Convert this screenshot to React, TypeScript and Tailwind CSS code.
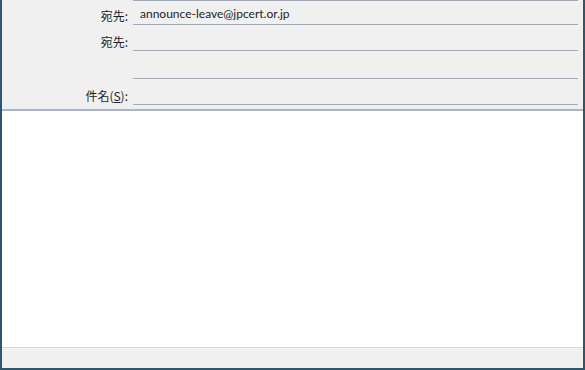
import React from "react";

const font = { fontFamily: '"Noto Sans CJK JP", "Noto Sans", sans-serif' };
const latin = { fontFamily: 'Lato, "Noto Sans", sans-serif' };

function Row({ label, value, h, accel }: { label?: string; value?: string; h: string; accel?: boolean }) {
  return (
    <div className={`flex ${h}`}>
      <div className="w-[131px] shrink-0 flex items-end justify-end pr-[5px] pb-[3px] text-[12px] text-[#1e1e1e] leading-none">
        {accel ? (
          <span>件名(<span className="underline">S</span>):</span>
        ) : (
          label && <span>{label}</span>
        )}
      </div>
      <div className="w-[445px] border-b border-[#a3acb6] flex items-end pl-[7px] pb-[4px] text-[12px] text-[#1e1e1e] leading-none" style={latin}>
        {value}
      </div>
    </div>
  );
}

export default function App() {
  return (
    <div className="w-[585px] h-[370px] flex flex-col border-l-2 border-r-2 border-b-2 border-[#2e566f] bg-white" style={font}>
      <div className="bg-[#f0f0f0] flex flex-col h-[109px]">
        <div className="flex h-px">
          <div className="w-[131px]" />
          <div className="w-[445px] bg-[#a3acb6]" />
        </div>
        <Row label="宛先:" value="announce-leave@jpcert.or.jp" h="h-[24px]" />
        <Row label="宛先:" h="h-[26px]" />
        <Row h="h-[28px]" />
        <Row accel h="h-[26px]" />
      </div>
      <div className="h-[2px] bg-[#a9b5c3]" />
      <div className="flex-1 bg-white" />
      <div className="h-px bg-[#d9d9d9]" />
      <div className="h-[20px] bg-[#f0f0f0]" />
    </div>
  );
}
